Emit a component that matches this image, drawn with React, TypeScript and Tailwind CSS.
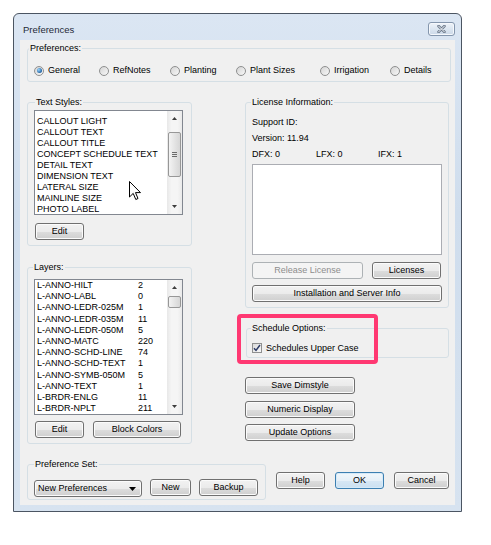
import type { ReactNode } from 'react';

const textStyles = [
  'CALLOUT LIGHT',
  'CALLOUT TEXT',
  'CALLOUT TITLE',
  'CONCEPT SCHEDULE TEXT',
  'DETAIL TEXT',
  'DIMENSION TEXT',
  'LATERAL SIZE',
  'MAINLINE SIZE',
  'PHOTO LABEL',
];

const layers: [string, string][] = [
  ['L-ANNO-HILT', '2'],
  ['L-ANNO-LABL', '0'],
  ['L-ANNO-LEDR-025M', '1'],
  ['L-ANNO-LEDR-035M', '11'],
  ['L-ANNO-LEDR-050M', '5'],
  ['L-ANNO-MATC', '220'],
  ['L-ANNO-SCHD-LINE', '74'],
  ['L-ANNO-SCHD-TEXT', '1'],
  ['L-ANNO-SYMB-050M', '5'],
  ['L-ANNO-TEXT', '1'],
  ['L-BRDR-ENLG', '11'],
  ['L-BRDR-NPLT', '211'],
];

const radios = [
  { label: 'General', w: 'w-[65px]', checked: true },
  { label: 'RefNotes', w: 'w-[71px]' },
  { label: 'Planting', w: 'w-[66px]' },
  { label: 'Plant Sizes', w: 'w-[84px]' },
  { label: 'Irrigation', w: 'w-[70px]' },
  { label: 'Details', w: 'w-[50px]' },
];

function Btn({
  className = '',
  children,
  disabled,
  primary,
}: {
  className?: string;
  children: ReactNode;
  disabled?: boolean;
  primary?: boolean;
}) {
  const look = disabled
    ? 'border-[#adb2b5] bg-[#f4f4f4] text-[#8d8d8d]'
    : primary
      ? 'border-[#3c7fb1] bg-[linear-gradient(to_bottom,#f1f7fb_0%,#e6f0f8_50%,#d7e7f4_51%,#cbe0f1_100%)] text-black shadow-[inset_0_0_0_1px_#d6eaf8]'
      : 'border-[#707070] bg-[linear-gradient(to_bottom,#f2f2f2_0%,#ebebeb_50%,#dddddd_51%,#cfcfcf_100%)] text-black shadow-[inset_0_0_0_1px_#fbfbfb]';
  return (
    <div
      className={`flex h-[17px] shrink-0 items-center justify-center rounded-[3px] border text-[9px] leading-none ${look} ${className}`}
    >
      {children}
    </div>
  );
}

function Radio({ checked }: { checked?: boolean }) {
  return (
    <span className="flex h-[10px] w-[10px] shrink-0 items-center justify-center rounded-full border border-[#8e8f8f] bg-[linear-gradient(135deg,#d4d4d4,#f8f8f8)]">
      {checked && (
        <span className="h-[5px] w-[5px] rounded-full bg-[radial-gradient(circle_at_35%_35%,#9ad6ff,#1c5c9c_75%)]" />
      )}
    </span>
  );
}

function Arrow({ up }: { up?: boolean }) {
  return (
    <svg width="5" height="3" viewBox="0 0 5 3">
      <path d={up ? 'M0 3 L2.5 0 L5 3 Z' : 'M0 0 L5 0 L2.5 3 Z'} fill="#3d3d3d" />
    </svg>
  );
}

function ScrollBar({ thumbTop, thumbH, grip }: { thumbTop: string; thumbH: string; grip?: boolean }) {
  return (
    <div className="flex w-[15px] flex-col bg-[linear-gradient(to_right,#e8e8e8,#f5f5f5_30%,#f5f5f5_70%,#eaeaea)]">
      <div className="flex h-[15px] items-center justify-center">
        <Arrow up />
      </div>
      <div className="flex-1">
        <div
          className={`${thumbTop} ${thumbH} ml-[1px] mr-[1px] flex flex-col items-center justify-center gap-[1px] rounded-[2px] border border-[#979797] bg-[linear-gradient(to_right,#f3f3f3,#e4e4e4_50%,#d6d6d6)]`}
        >
          {grip && (
            <>
              <span className="h-px w-[5px] bg-[#6b6b6b]" />
              <span className="h-px w-[5px] bg-[#6b6b6b]" />
              <span className="h-px w-[5px] bg-[#6b6b6b]" />
            </>
          )}
        </div>
      </div>
      <div className="flex h-[15px] items-center justify-center">
        <Arrow />
      </div>
    </div>
  );
}

function Cursor() {
  return (
    <svg className="absolute left-[94px] top-[70px]" width="13" height="20" viewBox="0 0 13 20">
      <path
        d="M0.5 0.5 L0.5 16 L4.2 12.4 L6.8 18.5 L9 17.5 L6.5 11.6 L11.5 11.6 Z"
        fill="#ffffff"
        stroke="#000000"
        strokeWidth="1"
        strokeLinejoin="round"
      />
    </svg>
  );
}

export default function App() {
  return (
    <div className="h-[545px] w-[491px] bg-white pl-[13px] pt-[13px] font-['Liberation_Sans',Arial,sans-serif] text-[9px] text-black">
      <div className="flex h-[499px] w-[449px] flex-col rounded-t-[6px] border border-[#4b5562] bg-[linear-gradient(to_bottom,#dbe6f3,#cfdded_40%,#d7e3f0)]">
        {/* title bar */}
        <div className="flex h-[26px] items-start justify-between pl-[9px] pr-[6px]">
          <span className="mt-[10px] text-[9.5px] leading-[11px] text-[#1f2a38]">Preferences</span>
          <div className="mt-[8px] flex h-[14px] w-[27px] items-center justify-center rounded-[3px] border border-[#8496ad] bg-[linear-gradient(to_bottom,#eef3f9,#dce6f1_50%,#cbd8e8)] shadow-[inset_0_0_0_1px_#f5f8fc]">
            <svg width="9" height="8" viewBox="0 0 9 8">
              <path d="M1.5 1 L7.5 7 M7.5 1 L1.5 7" stroke="#6c7a8c" strokeWidth="2.6" strokeLinecap="round" />
              <path d="M1.5 1 L7.5 7 M7.5 1 L1.5 7" stroke="#f4f6f9" strokeWidth="1" strokeLinecap="round" />
            </svg>
          </div>
        </div>

        {/* client area */}
        <div className="mx-[6px] flex h-[465px] flex-col bg-[#f0f0f0] pl-[7px] pt-[3px]">
          <fieldset className="h-[39px] w-[424px] rounded-[3px] border border-[#d5dfe5]">
            <legend className="ml-[1px] px-[1px] leading-[11px]">Preferences:</legend>
            <div className="mt-[11px] flex h-[11px] items-center pl-[6px]">
              {radios.map((r) => (
                <div key={r.label} className={`flex items-center gap-[4px] ${r.w}`}>
                  <Radio checked={r.checked} />
                  <span className="leading-[11px]">{r.label}</span>
                </div>
              ))}
            </div>
          </fieldset>

          <div className="mt-[15px] flex">
            {/* left column */}
            <div className="flex w-[165px] flex-col">
              <fieldset className="h-[149px] rounded-[3px] border border-[#d5dfe5]">
                <legend className="ml-[7px] px-[1px] leading-[11px]">Text Styles:</legend>
                <div className="relative ml-[6px] mt-[2px] flex h-[105px] w-[149px] border border-[#828790] bg-white">
                  <div className="flex-1 pl-[2px] pt-[5px] leading-[11px]">
                    {textStyles.map((t) => (
                      <div key={t}>{t}</div>
                    ))}
                  </div>
                  <ScrollBar thumbTop="mt-[6px]" thumbH="h-[45px]" grip />
                  <Cursor />
                </div>
                <Btn className="ml-[7px] mt-[8px] w-[49px]">Edit</Btn>
              </fieldset>

              <fieldset className="mt-[16px] h-[182px] rounded-[3px] border border-[#d5dfe5]">
                <legend className="ml-[5px] px-[1px] leading-[11px]">Layers:</legend>
                <div className="ml-[6px] mt-[6px] flex h-[136px] w-[149px] border border-[#828790] bg-white">
                  <div className="flex-1 pl-[2px] leading-[11.2px]">
                    {layers.map(([name, n]) => (
                      <div key={name} className="flex">
                        <span className="w-[101px]">{name}</span>
                        <span>{n}</span>
                      </div>
                    ))}
                  </div>
                  <ScrollBar thumbTop="mt-[1px]" thumbH="h-[12px]" />
                </div>
                <div className="ml-[7px] mt-[6px] flex gap-[9px]">
                  <Btn className="w-[49px]">Edit</Btn>
                  <Btn className="w-[88px]">Block Colors</Btn>
                </div>
              </fieldset>
            </div>

            {/* right column */}
            <div className="relative ml-[53px] flex w-[205px] flex-col">
              <fieldset className="h-[211px] w-[204px] rounded-[3px] border border-[#d5dfe5]">
                <legend className="ml-[5px] px-[1px] leading-[11px]">License Information:</legend>
                <div className="mt-[6px] pl-[6px] leading-[16px]">
                  <div>Support ID:</div>
                  <div>Version: 11.94</div>
                  <div className="flex">
                    <span className="w-[64px]">DFX: 0</span>
                    <span className="w-[62px]">LFX: 0</span>
                    <span>IFX: 1</span>
                  </div>
                  <div className="mt-[2px] h-[91px] w-[190px] border border-[#abadb3] bg-white" />
                  <div className="mt-[7px] flex gap-[9px]">
                    <Btn disabled className="w-[111px]">Release License</Btn>
                    <Btn className="w-[69px]">Licenses</Btn>
                  </div>
                  <Btn className="mt-[6px] w-[190px]">Installation and Server Info</Btn>
                </div>
              </fieldset>

              <fieldset className="ml-[1px] mt-[15px] h-[35px] w-[203px] rounded-[3px] border border-[#d5dfe5]">
                <legend className="ml-[4px] px-[1px] leading-[11px]">Schedule Options:</legend>
                <div className="ml-[5px] mt-[9px] flex h-[10px] items-center gap-[4px]">
                  <span className="flex h-[10px] w-[10px] items-center justify-center border border-[#8e8f8f] bg-[linear-gradient(135deg,#dadada,#f8f8f8)]">
                    <svg width="8" height="8" viewBox="0 0 8 8">
                      <path d="M1 4.2 L3 6.4 L7 1" fill="none" stroke="#2c3a66" strokeWidth="1.5" />
                    </svg>
                  </span>
                  <span className="leading-[11px]">Schedules Upper Case</span>
                </div>
              </fieldset>

              <div className="mt-[19px] flex flex-col gap-[6.5px]">
                <Btn className="w-[110px]">Save Dimstyle</Btn>
                <Btn className="w-[110px]">Numeric Display</Btn>
                <Btn className="w-[110px]">Update Options</Btn>
              </div>

              {/* highlight annotation */}
              <div className="absolute left-[-8px] top-[217px] h-[50px] w-[141px] rounded-[4px] border-[4px] border-[#ff3872]" />
            </div>
          </div>

          <div className="mt-[15px] flex">
            <fieldset className="h-[41px] w-[239px] rounded-[3px] border border-[#d5dfe5]">
              <legend className="ml-[6px] px-[1px] leading-[11px]">Preference Set:</legend>
              <div className="mt-[9px] flex items-start pl-[6px]">
                <div className="mt-[1px] flex h-[17px] w-[108px] items-center justify-between rounded-[3px] border border-[#707070] bg-[linear-gradient(to_bottom,#f2f2f2_0%,#ebebeb_50%,#dddddd_51%,#cfcfcf_100%)] pl-[3px] pr-[5px] shadow-[inset_0_0_0_1px_#fbfbfb]">
                  <span>New Preferences</span>
                  <svg width="7" height="4" viewBox="0 0 7 4">
                    <path d="M0 0 L7 0 L3.5 4 Z" fill="#000000" />
                  </svg>
                </div>
                <Btn className="ml-[8px] w-[41px]">New</Btn>
                <Btn className="ml-[8px] w-[59px]">Backup</Btn>
              </div>
            </fieldset>
            <div className="ml-[10px] mt-[13px] flex gap-[10px]">
              <Btn className="w-[49px]">Help</Btn>
              <Btn primary className="w-[49px]">OK</Btn>
              <Btn className="w-[55px]">Cancel</Btn>
            </div>
          </div>
        </div>
      </div>
    </div>
  );
}
